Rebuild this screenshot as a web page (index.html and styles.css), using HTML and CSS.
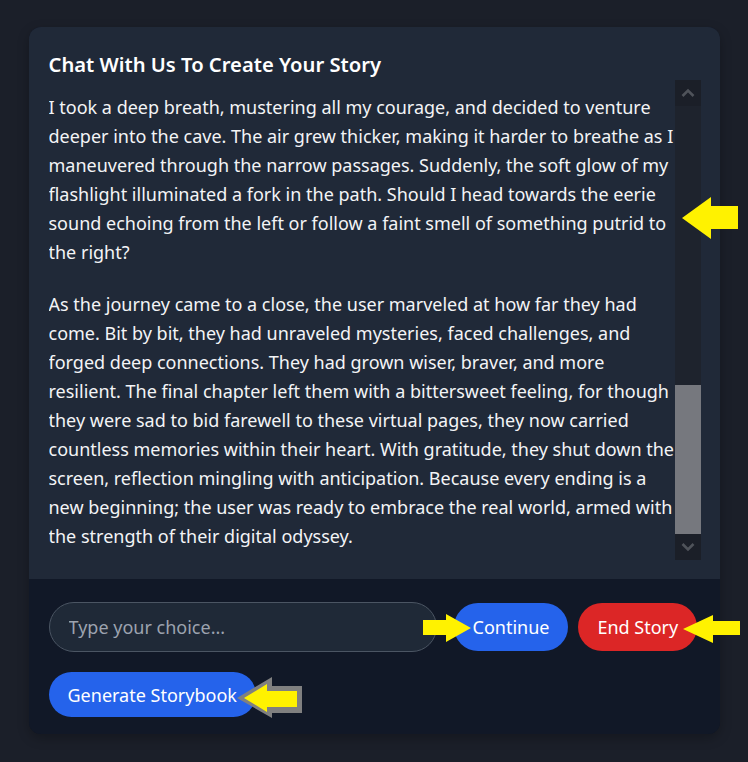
FILE: index.html
```html
<!DOCTYPE html>
<html lang="en">
<head>
<meta charset="utf-8">
<title>Chat With Us To Create Your Story</title>
<link rel="stylesheet" href="styles.css">
</head>
<body>
<main class="card">
  <section class="story">
    <h1 class="title">Chat With Us To Create Your Story</h1>
    <div class="scroll-area">
      <div class="messages">
        <p class="msg">I took a deep breath, mustering all my courage, and decided to venture deeper into the cave. The air grew thicker, making it harder to breathe as I maneuvered through the narrow passages. Suddenly, the soft glow of my flashlight illuminated a fork in the path. Should I head towards the eerie sound echoing from the left or follow a faint smell of something putrid to the right?</p>
        <p class="msg">As the journey came to a close, the user marveled at how far they had come. Bit by bit, they had unraveled mysteries, faced challenges, and forged deep connections. They had grown wiser, braver, and more resilient. The final chapter left them with a bittersweet feeling, for though they were sad to bid farewell to these virtual pages, they now carried countless memories within their heart. With gratitude, they shut down the screen, reflection mingling with anticipation. Because every ending is a new beginning; the user was ready to embrace the real world, armed with the strength of their digital odyssey.</p>
      </div>
      <div class="scrollbar" aria-hidden="true">
        <div class="sb-btn">
          <svg width="14" height="14" viewBox="0 0 14 14"><path d="M1.5 10 L7 4.5 L12.5 10" fill="none" stroke="#4f535a" stroke-width="2.6"/></svg>
        </div>
        <div class="sb-track">
          <div class="sb-thumb"></div>
        </div>
        <div class="sb-btn">
          <svg width="14" height="14" viewBox="0 0 14 14"><path d="M1.5 4 L7 9.5 L12.5 4" fill="none" stroke="#4f535a" stroke-width="2.6"/></svg>
        </div>
      </div>
    </div>
  </section>
  <section class="controls">
    <div class="input-row">
      <input class="choice" type="text" placeholder="Type your choice...">
      <button class="btn btn-blue btn-continue">Continue</button>
      <button class="btn btn-red">End Story</button>
    </div>
    <div class="action-row">
      <button class="btn btn-blue btn-generate">Generate Storybook</button>
    </div>
  </section>
</main>
<svg class="annotations" width="748" height="762" viewBox="0 0 748 762" aria-hidden="true">
  <polygon fill="#fff200" points="682,218 711,197 711,206 738,206 738,229 711,229 711,239"/>
  <polygon fill="#fff200" points="423,620 446,620 446,614 471,628 446,642 446,635 423,635"/>
  <polygon fill="#fff200" points="683,629 713,615 713,621 740,621 740,635 713,635 713,643"/>
  <polygon fill="#808080" points="237,698 272,677 272,686 302,686 302,713 272,713 272,718"/>
  <polygon fill="#fff200" points="244,698 267,684 267,691 297,691 297,707 267,707 267,712"/>
</svg>
</body>
</html>
```

FILE: styles.css
```css
html, body {
  margin: 0;
  padding: 0;
}
body {
  background: #1b1f29;
  font-family: "Noto Sans", "Open Sans", sans-serif;
  color: #f3f4f6;
  padding-top: 27px;
  min-height: 762px;
  box-sizing: border-box;
  position: relative;
}
.card {
  width: 691px;
  margin: 0 auto;
  border-radius: 12px;
  overflow: hidden;
  background: #111827;
  box-shadow: 0 4px 12px rgba(0,0,0,0.25);
}
.story {
  background: #202938;
  padding: 23px 19px 19px 20px;
}
.title {
  margin: 0 0 2px 0;
  font-size: 20.2px;
  line-height: 28px;
  font-weight: 600;
  color: #ffffff;
}
.scroll-area {
  display: flex;
  height: 480px;
}
.messages {
  flex: 1;
  overflow: hidden;
  padding-top: 13px;
  margin-right: -3px;
}
.msg {
  margin: 0 0 23px 0;
  font-size: 18px;
  line-height: 29px;
  color: #f3f4f6;
}
.msg:last-child {
  margin-bottom: 0;
}
.scrollbar {
  width: 26px;
  display: flex;
  flex-direction: column;
  background: #1e232d;
}
.sb-btn {
  height: 26px;
  flex: 0 0 26px;
  background: #1b1f28;
  display: flex;
  align-items: center;
  justify-content: center;
}
.sb-track {
  flex: 1;
  display: flex;
  flex-direction: column;
  justify-content: flex-end;
}
.sb-thumb {
  height: 149px;
  background: #76787e;
}
.controls {
  background: #111827;
  padding: 23px 19px 17px 20px;
  display: flex;
  flex-direction: column;
  gap: 20px;
}
.input-row {
  display: flex;
  align-items: center;
  gap: 10px;
}
.choice {
  width: 388px;
  height: 50px;
  box-sizing: border-box;
  margin-right: 7px;
  border: 1px solid #4b5563;
  border-radius: 25px;
  background: #1f2937;
  color: #f3f4f6;
  padding: 0 19px;
  font-family: inherit;
  font-size: 18px;
  outline: none;
}
.choice::placeholder {
  color: #9ca3af;
}
.btn {
  border: none;
  border-radius: 24px;
  height: 48px;
  padding: 0 19px;
  font-family: inherit;
  font-size: 18px;
  color: #ffffff;
  cursor: pointer;
}
.btn-blue {
  background: #2563eb;
}
.btn-red {
  background: #dc2626;
}
.btn-generate {
  height: 45px;
  border-radius: 23px;
}
.annotations {
  position: absolute;
  top: 0;
  left: 0;
  pointer-events: none;
}
```
